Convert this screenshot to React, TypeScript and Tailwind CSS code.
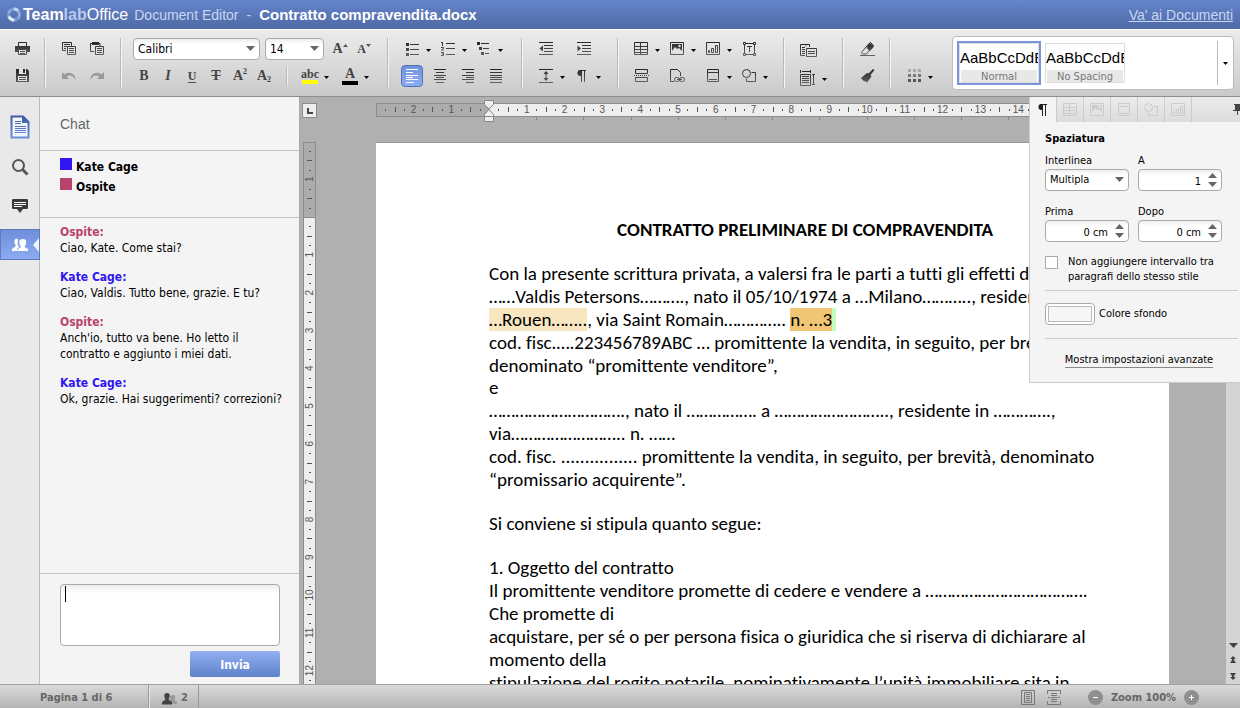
import clsx from 'clsx';
import type { ReactNode } from 'react';

const INK = 'url(#ink)';

const QUARTER_CM = 9.45;

const members = [
  { name: 'Kate Cage', swatch: 'bg-[#3016f2]', text: 'text-[#3016f2]' },
  { name: 'Ospite', swatch: 'bg-[#b8436b]', text: 'text-[#b8436b]' },
];

const messages = [
  { from: 1, lines: ['Ciao, Kate. Come stai?'] },
  { from: 0, lines: ['Ciao, Valdis. Tutto bene, grazie. E tu?'] },
  { from: 1, lines: ["Anch'io, tutto va bene. Ho letto il", 'contratto e aggiunto i miei dati.'] },
  { from: 0, lines: ['Ok, grazie. Hai suggerimenti? correzioni?'] },
];

function Svg({ w = 16, h = 16, children }: { w?: number; h?: number; children: ReactNode }) {
  return (
    <svg
      width={w}
      height={h}
      viewBox={`0 0 ${w} ${h}`}
      fill="none"
      stroke={INK}
      className="shrink-0"
      aria-hidden="true"
    >
      {children}
    </svg>
  );
}

function InkGradient() {
  return (
    <svg width="0" height="0" className="absolute" aria-hidden="true">
      <linearGradient id="ink" gradientUnits="userSpaceOnUse" x1="0" y1="0" x2="0" y2="16">
        <stop offset="0" stopColor="#222" />
        <stop offset="1" stopColor="#666" />
      </linearGradient>
      <linearGradient id="docBlue" gradientUnits="userSpaceOnUse" x1="0" y1="0" x2="0" y2="24">
        <stop offset="0" stopColor="#3d5a9c" />
        <stop offset="1" stopColor="#6b96e0" />
      </linearGradient>
    </svg>
  );
}

/* ---------- icons ---------- */

const PrintIcon = () => (
  <Svg>
    <path d="M4.5 5V1.5h8V5" />
    <path d="M1 5h15v6h-3V8H4v3H1z" fill={INK} stroke="none" />
    <path d="M4.5 8.5h8v5h-8zM6 10.5h5M6 12.5h5" />
  </Svg>
);

const SaveIcon = () => (
  <Svg>
    <path d="M2 1h11l2 2v11H2z" fill={INK} stroke="none" />
    <path d="M5 1h7v5H5zM4 8h9v5H4z" fill="#e4e4e4" stroke="none" />
    <path d="M9 1h2v4H9z" fill={INK} stroke="none" />
    <path d="M5 9.5h7M5 11.5h7" />
  </Svg>
);

const CopyIcon = () => (
  <Svg>
    <path d="M5 9.500H1.500v-8h9V5M3 3.500h6M3 5.500h3M3 7.500h2" />
    <path d="M6.500 5.500h8v8h-8zM8 7.500h5M8 9.500h5M8 11.500h5" />
  </Svg>
);

const PasteIcon = () => (
  <Svg>
    <path d="M5 10.500H1.500v-8h2M9 2.500h2V5" />
    <path d="M3 1h7v3H3z" fill={INK} stroke="none" />
    <path d="M6.500 5.500h8v8h-8zM8 7.500h5M8 9.500h5M8 11.500h5" />
  </Svg>
);

const UndoIcon = () => (
  <Svg>
    <path d="M1 4v7h7L5.500 8.500C9 6.500 12 7.500 14.500 12 15 6 8 2.500 3.500 6.500z" fill="#999" stroke="none" />
  </Svg>
);

const RedoIcon = () => (
  <Svg>
    <path d="M15 4v7H8l2.500-2.500C7 6.500 4 7.500 1.500 12 1 6 8 2.500 12.500 6.500z" fill="#999" stroke="none" />
  </Svg>
);

const BulletsIcon = () => (
  <Svg>
    <path d="M2 2h3v3H2zM2 7h3v3H2zM2 12h3v3H2z" fill={INK} stroke="none" />
    <path d="M6 3.500h9M6 8.500h9M6 13.500h9" />
  </Svg>
);

const NumbersIcon = () => (
  <Svg>
    <path d="M1 1.500h1.500V5M1 6.500h2.500v1L1.500 9h2M1 11.500h2.500v3H1M2 13h1.500" />
    <path d="M6 2.500h9M6 7.500h9M6 13.500h9" />
  </Svg>
);

const MultilevelIcon = () => (
  <Svg>
    <path d="M1 1h3v3H1zM3 6h3v3H3zM5 11h3v3H5z" fill={INK} stroke="none" />
    <path d="M5 2.500h8M7 7.500h6M9 12.500h4" />
  </Svg>
);

const AlignIcon = ({ kind, light }: { kind: 'left' | 'center' | 'right' | 'full'; light?: boolean }) => {
  const lines = {
    left: 'M2 1.500h12M2 4.500h7M2 7.500h12M2 9.500h7M2 11.500h12M2 14.500h8',
    center: 'M2 1.500h12M4 4.500h8M2 7.500h12M4 9.500h8M2 11.500h12M4 14.500h8',
    right: 'M2 1.500h12M6 4.500h8M2 7.500h12M6 9.500h8M2 11.500h12M6 14.500h8',
    full: 'M2 1.500h12M2 4.500h12M2 7.500h12M2 9.500h12M2 11.500h12M2 14.500h12',
  };
  return (
    <Svg>
      <path d={lines[kind]} stroke={light ? '#fff' : INK} />
    </Svg>
  );
};

const IndentIcon = ({ out }: { out?: boolean }) => (
  <Svg>
    <path d="M1 1.500h14M6 4.500h9M6 7.500h9M6 10.500h9M1 13.500h14" />
    <path d={out ? 'M5 4.500v6L1.500 7.500z' : 'M1.500 4.500v6L5 7.500z'} fill={INK} stroke="none" />
  </Svg>
);

const SpacingIcon = () => (
  <Svg>
    <path d="M1 1.500h14M1 14.500h14M8 4v8" />
    <path d="M5.500 6L8 3l2.500 3zM5.500 10L8 13l2.500-3z" fill={INK} stroke="none" />
  </Svg>
);

const PilcrowIcon = ({ dark }: { dark?: boolean }) => (
  <Svg>
    <path d="M7.500 3v11M10.500 3v11M5 2.500h7" stroke={dark ? '#222' : INK} />
    <path d="M8 2H6C2.500 2 2.500 8 6 8h2z" fill={dark ? '#222' : INK} stroke="none" />
  </Svg>
);

const TableIcon = ({ faint }: { faint?: boolean }) => (
  <Svg>
    <path
      d="M1.500 1.500h13v12h-13zM2 5.500h12M2 8.500h12M2 11.500h12M7.500 2v11"
      stroke={faint ? '#ccc' : INK}
    />
  </Svg>
);

const ImageIcon = ({ faint }: { faint?: boolean }) => {
  const c = faint ? '#ccc' : INK;
  return (
    <Svg>
      <path d="M1.500 1.500h13v12h-13z" stroke={c} />
      <path d="M3 3h10v7l-3-3-2 1-2-2-3 4z" fill={c} stroke="none" />
      <circle cx="10.500" cy="5" r="1.200" fill="#e6e6e6" stroke="none" />
    </Svg>
  );
};

const ChartIcon = ({ faint }: { faint?: boolean }) => (
  <Svg>
    <path
      d="M1.500 1.500h13v12h-13zM3.500 9.500h1v2h-1zM6.500 7.500h2v4h-2zM10.500 4.500h2v7h-2z"
      stroke={faint ? '#ccc' : INK}
    />
  </Svg>
);

const TextBoxIcon = () => (
  <Svg>
    <path d="M3.500 4v8M13.500 4v8M5 2.500h7M5 13.500h7M6 5.500h5M8.500 5v6" />
    <path d="M2.500 1.500h2v2h-2zM12.500 1.500h2v2h-2zM2.500 12.500h2v2h-2zM12.500 12.500h2v2h-2z" />
  </Svg>
);

const BreakIcon = () => (
  <Svg>
    <path d="M2.500 1.500h12v4h-12zM2.500 9.500h12v4h-12z" />
    <path d="M1 7.500h15" strokeDasharray="1 1" />
  </Svg>
);

const PageLinkIcon = () => (
  <Svg>
    <path d="M5 13.500H1.500v-12h7l3 3V8" />
    <rect x="5.500" y="9.500" width="5" height="4" rx="2" />
    <rect x="10.500" y="9.500" width="5" height="4" rx="2" />
    <path d="M8 11.500h5" />
  </Svg>
);

const HeaderIcon = ({ faint }: { faint?: boolean }) => (
  <Svg>
    <path d="M2.500 1.500h11v12h-11zM3 4.500h10M4 11.500h8" stroke={faint ? '#ccc' : INK} />
  </Svg>
);

const ShapesIcon = ({ faint }: { faint?: boolean }) => {
  const c = faint ? '#ccc' : INK;
  return (
    <Svg>
      <circle cx="5.500" cy="5.500" r="4" stroke={c} />
      <path d="M10.500 4.500h4v9h-9v-3" stroke={c} />
    </Svg>
  );
};

const WrapIcon = () => (
  <Svg w={18}>
    <path d="M6 12.500H1.500v-11h9V4M3 4.500h3M3 6.500h3M3 8.500h3M3 10.500h3M7 2.500v1" />
    <path d="M7.500 5.500h10v8h-10zM9 8.500h7M9 10.500h7" />
  </Svg>
);

const MarginsIcon = () => (
  <Svg w={18}>
    <path d="M3 1.500h8M1.500 0v3M11.500 0v3M14.500 5v9M13 4.500h3M13 14.500h3" />
    <path d="M1.500 4.500h10v11h-10zM3 6.500h7M3 8.500h7M3 10.500h7M3 12.500h7" />
  </Svg>
);

const EraserIcon = () => (
  <Svg>
    <path d="M2.500 11.500L9.500 3l2-1.500 3 3-7 8.500h-4zM1 14.500h15" />
    <path d="M9 4l2-2 4 3.500-4 4.500L7.500 7z" fill={INK} stroke="none" />
  </Svg>
);

const BrushIcon = () => (
  <Svg>
    <path
      d="M14 1l1.500 1-4 5 1 1.500L8 14.500 6 13l-1 .500-1-1.500-1-.500-1-1.500 6-5 1.500.500z"
      fill={INK}
      stroke="none"
    />
  </Svg>
);

const GridIcon = () => (
  <Svg>
    <path d="M2 2.500h13" stroke="#aaa" strokeWidth="3" strokeDasharray="3 2" />
    <path d="M2 7.500h13" stroke="#777" strokeWidth="3" strokeDasharray="3 2" />
    <path d="M2 12.500h13" stroke="#555" strokeWidth="3" strokeDasharray="3 2" />
  </Svg>
);

const LogoMark = () => (
  <Svg>
    <circle cx="7" cy="7.500" r="5.500" stroke="#8fa9dd" strokeWidth="3" strokeDasharray="5 .760" />
    <path d="M2 9.500A5.500 5.500 0 007 13" stroke="#e3ebfa" strokeWidth="3" />
    <path d="M7 2a5.500 5.500 0 014 1.500" stroke="#c3d2f0" strokeWidth="3" />
  </Svg>
);

function Triangle({ up, color = '#000', w = 5 }: { up?: boolean; color?: string; w?: 5 | 9 }) {
  const h = w === 5 ? 3 : 5;
  return (
    <svg width={w} height={h} viewBox={`0 0 ${w} ${h}`} aria-hidden="true">
      <path d={up ? `M0 ${h}h${w}L${w / 2} 0z` : `M0 0h${w}L${w / 2} ${h}z`} fill={color} />
    </svg>
  );
}

/* ---------- toolbar ---------- */

function Tool({ label, active, children }: { label: string; active?: boolean; children: ReactNode }) {
  return (
    <button
      type="button"
      aria-label={label}
      className={clsx(
        'flex size-[22px] shrink-0 items-center justify-center',
        active && 'rounded-sm border border-[#5470b4] bg-linear-to-b from-[#6f91df] to-[#8fadf2]',
      )}
    >
      {children}
    </button>
  );
}

function Split({ label, children }: { label: string; children: ReactNode }) {
  return (
    <div className="flex shrink-0">
      <Tool label={label}>{children}</Tool>
      <button
        type="button"
        aria-label={`${label}: opzioni`}
        className="flex w-[10px] items-center justify-center pt-0.5"
      >
        <Triangle />
      </button>
    </div>
  );
}

function Group({ className, children }: { className?: string; children: ReactNode }) {
  return (
    <div
      className={clsx(
        'mr-px flex h-[50px] shrink-0 flex-col gap-[5px] border-r border-[#b9b9b9] shadow-[1px_0_0_#f4f4f4]',
        className,
      )}
    >
      {children}
    </div>
  );
}

function Letter({ className, children }: { className?: string; children: ReactNode }) {
  return (
    <span className={clsx("font-['Liberation_Serif',serif] leading-none font-bold text-[#444]", className)}>
      {children}
    </span>
  );
}

const fieldClass =
  'h-[22px] w-full appearance-none rounded-sm border border-[#aaa] bg-white bg-linear-to-b from-[#eee] to-white to-25% text-black outline-none';

function Combo({ id, label, value, className }: { id: string; label?: string; value: string; className?: string }) {
  return (
    <div className={clsx('relative', className)}>
      <select id={id} aria-label={label} className={clsx(fieldClass, 'pl-1')}>
        <option>{value}</option>
      </select>
      <span className="pointer-events-none absolute top-2 right-[5px] flex">
        <Triangle w={9} color="#666" />
      </span>
    </div>
  );
}

function Toolbar() {
  return (
    <div className="flex h-[68px] shrink-0 items-start border-t border-b border-t-white border-b-[#8e8e8e] bg-linear-to-b from-[#ececec] to-[#cacaca] pt-2">
      <Group className="px-[11px]">
        <Tool label="Stampa">
          <PrintIcon />
        </Tool>
        <Tool label="Salva">
          <SaveIcon />
        </Tool>
      </Group>
      <Group className="px-3">
        <div className="flex gap-1.5">
          <Tool label="Copia">
            <CopyIcon />
          </Tool>
          <Tool label="Incolla">
            <PasteIcon />
          </Tool>
        </div>
        <div className="flex gap-1.5">
          <Tool label="Annulla">
            <UndoIcon />
          </Tool>
          <Tool label="Ripeti">
            <RedoIcon />
          </Tool>
        </div>
      </Group>
      <Group className="pr-3 pl-[11px]">
        <div className="flex gap-[5px]">
          <Combo id="font" label="Carattere" value="Calibri" className="w-[127px] text-xs" />
          <Combo id="size" label="Dimensione" value="14" className="w-[59px] text-xs" />
          <div className="flex gap-0.5">
            <Tool label="Aumenta">
              <Letter className="text-sm">A</Letter>
              <span className="mb-2">
                <Triangle up color="#555" />
              </span>
            </Tool>
            <Tool label="Riduci">
              <Letter className="text-xs">A</Letter>
              <span className="mb-2">
                <Triangle color="#555" />
              </span>
            </Tool>
          </div>
        </div>
        <div className="flex gap-0.5">
          <Tool label="Grassetto">
            <Letter className="text-sm">B</Letter>
          </Tool>
          <Tool label="Corsivo">
            <Letter className="text-sm italic">I</Letter>
          </Tool>
          <Tool label="Sottolineato">
            <Letter className="border-b border-[#555] text-xs">U</Letter>
          </Tool>
          <Tool label="Barrato">
            <Letter className="text-sm line-through">T</Letter>
          </Tool>
          <Tool label="Apice">
            <Letter className="text-sm">A</Letter>
            <Letter className="mb-2 text-[8px]">2</Letter>
          </Tool>
          <Tool label="Pedice">
            <Letter className="text-sm">A</Letter>
            <Letter className="mt-2 text-[8px]">2</Letter>
          </Tool>
          <div className="mx-[9px] my-px w-0.5 border-l border-[#b9b9b9] bg-[#f0f0f0]" />
          <div className="flex gap-2">
            <Split label="Evidenzia">
              <span className="flex flex-col items-center">
                <Letter className="text-xs leading-[10px]">abc</Letter>
                <span className="h-1 w-4 bg-[#ff0]" />
              </span>
            </Split>
            <Split label="Colore carattere">
              <span className="flex flex-col items-center">
                <Letter className="text-sm leading-[11px]">A</Letter>
                <span className="h-1 w-4 bg-black" />
              </span>
            </Split>
          </div>
        </div>
      </Group>
      <Group className="pr-[14px] pl-3">
        <div className="flex gap-1">
          <Split label="Elenco puntato">
            <BulletsIcon />
          </Split>
          <Split label="Elenco numerato">
            <NumbersIcon />
          </Split>
          <Split label="Elenco a livelli">
            <MultilevelIcon />
          </Split>
        </div>
        <div className="flex gap-1.5">
          <Tool label="Allinea a sinistra" active>
            <AlignIcon kind="left" light />
          </Tool>
          <Tool label="Centra">
            <AlignIcon kind="center" />
          </Tool>
          <Tool label="Allinea a destra">
            <AlignIcon kind="right" />
          </Tool>
          <Tool label="Giustifica">
            <AlignIcon kind="full" />
          </Tool>
        </div>
      </Group>
      <Group className="pr-[14px] pl-3">
        <div className="flex gap-4">
          <Tool label="Riduci rientro">
            <IndentIcon out />
          </Tool>
          <Tool label="Aumenta rientro">
            <IndentIcon />
          </Tool>
        </div>
        <div className="flex gap-1">
          <Split label="Interlinea paragrafo">
            <SpacingIcon />
          </Split>
          <Split label="Caratteri non stampabili">
            <PilcrowIcon />
          </Split>
        </div>
      </Group>
      <Group className="pr-[13px] pl-[11px]">
        <div className="flex gap-1">
          <Split label="Tabella">
            <TableIcon />
          </Split>
          <Split label="Immagine">
            <ImageIcon />
          </Split>
          <Split label="Grafico">
            <ChartIcon />
          </Split>
          <Tool label="Casella di testo">
            <TextBoxIcon />
          </Tool>
        </div>
        <div className="flex gap-1">
          <div className="flex gap-[14px] pr-[10px]">
            <Tool label="Interruzione">
              <BreakIcon />
            </Tool>
            <Tool label="Collegamento">
              <PageLinkIcon />
            </Tool>
          </div>
          <Split label="Intestazione">
            <HeaderIcon />
          </Split>
          <Split label="Forma">
            <ShapesIcon />
          </Split>
        </div>
      </Group>
      <Group className="pt-0.5 pr-[13px] pl-3">
        <Tool label="Disposizione">
          <WrapIcon />
        </Tool>
        <Split label="Margini">
          <MarginsIcon />
        </Split>
      </Group>
      <Group className="pr-[11px] pl-3">
        <Tool label="Cancella stile">
          <EraserIcon />
        </Tool>
        <Tool label="Copia stile">
          <BrushIcon />
        </Tool>
      </Group>
      <div className="flex h-[50px] items-end pb-px pl-3">
        <Split label="Combinazione colori">
          <GridIcon />
        </Split>
      </div>
      <div className="-mt-0.5 mr-[6px] ml-auto flex h-[54px] w-[282px] items-center rounded border border-[#bbb] bg-white pl-1">
        <StyleTile name="Normal" selected />
        <StyleTile name="No Spacing" />
        <button
          type="button"
          aria-label="Altri stili"
          className="ml-auto flex h-11 w-4 items-center justify-center border-l border-[#bbb]"
        >
          <Triangle />
        </button>
      </div>
    </div>
  );
}

function StyleTile({ name, selected }: { name: string; selected?: boolean }) {
  return (
    <button
      type="button"
      className={clsx('mr-0.5 shrink-0 border-2', selected ? 'border-[#7b95dd]' : 'border-transparent')}
    >
      <span className="flex h-10 w-20 flex-col overflow-hidden border border-[#ddd] text-left">
        <span className="h-6 pt-0.5 font-['Liberation_Sans',sans-serif] text-[15px] leading-6 whitespace-nowrap text-black">
          AaBbCcDdE
        </span>
        <span className="mx-px mt-0.5 h-3 bg-[#e8e8e8] text-center text-[11px] leading-[14px] text-[#777]">
          {name}
        </span>
      </span>
    </button>
  );
}

/* ---------- left side ---------- */

function Rail() {
  return (
    <nav className="flex w-10 shrink-0 flex-col items-center border-r border-[#bbb] bg-[#e9e9e9]">
      <button type="button" aria-label="File" className="mt-3 flex h-9 items-center justify-center">
        <svg width="20" height="24" viewBox="0 0 20 24" fill="none" aria-hidden="true">
          <path d="M2 1.500h11l5.500 5.500v15.500H1.500v-21z" fill="#f2f5fb" stroke="url(#docBlue)" strokeWidth="2" />
          <path d="M12 1l7 7h-7z" fill="url(#docBlue)" />
          <path
            d="M5 6.500h6M5 8.500h6M5 11.500h11M5 13.500h11M5 15.500h11M5 17.500h11"
            stroke="url(#docBlue)"
          />
        </svg>
      </button>
      <button type="button" aria-label="Cerca" className="mt-1 flex h-9 items-center justify-center">
        <svg width="18" height="18" viewBox="0 0 18 18" fill="none" stroke="#555" aria-hidden="true">
          <circle cx="7.500" cy="7.500" r="5.500" strokeWidth="2" />
          <path d="M11.500 11.500l5 5" strokeWidth="3" />
        </svg>
      </button>
      <button type="button" aria-label="Commenti" className="mt-[3px] flex h-9 items-center justify-center">
        <svg width="18" height="16" viewBox="0 0 18 16" aria-hidden="true">
          <path d="M2 1h14q1 0 1 1v8q0 1-1 1h-4l-3 4-3-4H2q-1 0-1-1V2q0-1 1-1z" fill="#3a3a3a" />
          <path d="M3 4.500h12M3 6.500h12M3 8.500h8" stroke="#fff" />
        </svg>
      </button>
      <button
        type="button"
        aria-label="Chat"
        className="relative mt-[5px] -mr-px flex h-[31px] w-10 items-center justify-center border border-[#5f7abb] bg-linear-to-b from-[#6f8fdc] to-[#8cabf1]"
      >
        <svg width="16" height="14" viewBox="0 0 16 14" fill="#fff" aria-hidden="true">
          <path d="M6 1C3 0 2 2 2.500 5L4 8 0 11v2h6l-1-2 2-2-1.500-3z" />
          <path d="M11 1C7 1 7 4 7.500 6L9 9l-3 2v2h10v-2l-3.500-2L14 6c.500-2 .500-5-3-5z" />
        </svg>
        <svg width="6" height="14" viewBox="0 0 6 14" className="absolute right-0" aria-hidden="true">
          <path d="M6 0v14L0 7z" fill="#f4f4f4" />
        </svg>
      </button>
    </nav>
  );
}

function ChatPanel() {
  return (
    <aside className="flex w-[260px] shrink-0 flex-col border-r border-[#aaa] bg-[#f4f4f4] text-xs text-black">
      <h2 className="flex h-[54px] items-center border-b border-[#c4c4c4] pl-5 font-['Liberation_Sans',sans-serif] text-sm text-[#666]">
        Chat
      </h2>
      <ul className="h-[67px] border-b border-[#c4c4c4] pt-1.5 pl-5 font-bold">
        {members.map((m) => (
          <li key={m.name} className="flex h-5 gap-1 leading-5">
            <span className={clsx('mt-px size-3', m.swatch)} />
            {m.name}
          </li>
        ))}
      </ul>
      <div className="flex flex-1 flex-col gap-[13px] overflow-hidden pt-1.5 pl-5 leading-4">
        {messages.map((m, i) => (
          <div key={i} className="whitespace-nowrap">
            <p className={clsx('font-bold', members[m.from].text)}>{members[m.from].name}:</p>
            {m.lines.map((line) => (
              <p key={line}>{line}</p>
            ))}
          </div>
        ))}
      </div>
      <form className="relative flex h-[111px] flex-col items-end border-t border-[#c4c4c4] pt-[10px] pr-[19px] pl-5">
        <textarea
          aria-label="Messaggio"
          className="h-[62px] w-full resize-none rounded-sm border border-[#aaa] bg-white bg-linear-to-b from-[#eee] to-white to-15% px-1 outline-none"
        />
        <span className="absolute top-3 left-[25px] h-4 w-px bg-black" />
        <button
          type="button"
          className="mt-[5px] h-[26px] w-[90px] rounded-xs bg-linear-to-b from-[#92b0f2] to-[#5f82cb] pt-0.5 text-xs font-bold text-white"
        >
          Invia
        </button>
      </form>
    </aside>
  );
}

/* ---------- document ---------- */

function rulerMarks(from: number, to: number) {
  const marks: { at: number; kind: 'num' | 'half' | 'quarter'; n: number }[] = [];
  for (let q = from * 4; q <= to * 4; q++) {
    if (q === 0) continue;
    const kind = q % 4 === 0 ? 'num' : q % 2 === 0 ? 'half' : 'quarter';
    marks.push({ at: q * QUARTER_CM, kind, n: Math.abs(q / 4) });
  }
  return marks;
}

function HorizontalRuler() {
  return (
    <svg width="793" height="24" className="shrink-0 overflow-visible" aria-hidden="true">
      <rect x="0.500" y="3.500" width="792" height="13" fill="#acacac" stroke="#8c8c8c" />
      <rect x="113" y="4" width="640" height="12" fill="#eee" />
      <g transform="translate(113 0)">
        {rulerMarks(-2.75, 16.5).map((m) =>
          m.kind === 'num' ? (
            <text
              key={m.at}
              x={m.at}
              y="13"
              textAnchor="middle"
              className="fill-[#555] font-['Liberation_Sans',sans-serif] text-[10px]"
            >
              {m.n}
            </text>
          ) : (
            <path
              key={m.at}
              d={`M${Math.round(m.at) + 0.5} ${m.kind === 'half' ? 7 : 9}v${m.kind === 'half' ? 5 : 2}`}
              stroke="#555"
            />
          ),
        )}
        {Array.from({ length: 13 }, (_, i) => (
          <path key={i} d={`M${Math.round((i + 1) * 47.2) + 0.5} 17v3`} stroke="#888" />
        ))}
        <path d="M-4.500 0.500h9v4L0 9l-4.500-4.500z" fill="#eee" stroke="#888" />
        <path d="M0 9.500l4.500 5v7h-9v-7zM-4.500 16.500h9" fill="#eee" stroke="#888" />
      </g>
    </svg>
  );
}

function VerticalRuler() {
  return (
    <svg width="13" height="560" className="shrink-0" aria-hidden="true">
      <rect x="0.500" y="0.500" width="12" height="600" fill="#eee" stroke="#8c8c8c" />
      <rect x="0.500" y="0.500" width="12" height="75" fill="#acacac" stroke="#8c8c8c" />
      <g transform="translate(0 75)">
        {rulerMarks(-1.75, 12.5).map((m) =>
          m.kind === 'num' ? (
            <text
              key={m.at}
              transform={`translate(10 ${m.at}) rotate(-90)`}
              textAnchor="middle"
              className="fill-[#555] font-['Liberation_Sans',sans-serif] text-[10px]"
            >
              {m.n}
            </text>
          ) : (
            <path
              key={m.at}
              d={`M${m.kind === 'half' ? 4 : 6} ${Math.round(m.at) + 0.5}h${m.kind === 'half' ? 5 : 2}`}
              stroke="#555"
            />
          ),
        )}
      </g>
    </svg>
  );
}

function Page() {
  return (
    <article className="w-[793px] shrink-0 overflow-hidden border-t border-[#9a9a9a] bg-white pt-[75px] pr-12 pl-[113px] font-['Carlito','Lato',sans-serif] text-[19px] leading-[23px] whitespace-nowrap text-black [font-variant-ligatures:none]">
      <h1 className="mb-[21px] text-center font-bold">CONTRATTO PRELIMINARE DI COMPRAVENDITA</h1>
      <p>
        Con la presente scrittura privata, a valersi fra le parti a tutti gli effetti di
        <br />
        ……Valdis Petersons………., nato il 05/10/1974 a …Milano……….., residente in
        <br />
        <mark className="bg-[#f8e6c1] text-black">…Rouen……..</mark>, via Saint Romain…………..{' '}
        <mark className="border-r-4 border-[#bfffbf] bg-[#f0c674] text-black">n. …3</mark>
        <br />
        cod. fisc.….223456789ABC … promittente la vendita, in seguito, per brevità,
        <br />
        denominato “promittente venditore”,
      </p>
      <p className="leading-[22px]">e</p>
      <p>
        …………………………., nato il ……………. a …………………….., residente in ………….,
        <br />
        via…………………….. n. ……
        <br />
        cod. fisc. ................ promittente la vendita, in seguito, per brevità, denominato
        <br />
        “promissario acquirente”.
      </p>
      <p className="mt-[21px]">Si conviene si stipula quanto segue:</p>
      <p className="mt-[21px]">1. Oggetto del contratto</p>
      <p>
        Il promittente venditore promette di cedere e vendere a ……………………………….
        <br />
        Che promette di
        <br />
        acquistare, per sé o per persona fisica o giuridica che si riserva di dichiarare al
        <br />
        momento della
        <br />
        stipulazione del rogito notarile, nominativamente l’unità immobiliare sita in
      </p>
    </article>
  );
}

function DocumentArea() {
  return (
    <main className="flex min-w-0 flex-1 bg-[#b0b0b0]">
      <div className="flex min-w-0 flex-1 flex-col overflow-hidden">
        <div className="flex h-[45px] shrink-0 pt-[3px] pl-0.5">
          <button
            type="button"
            aria-label="Tabulazione"
            className="mt-[3px] mr-[59px] flex size-[15px] shrink-0 items-center justify-center border border-[#8c8c8c] bg-[#eee]"
          >
            <svg width="6" height="6" aria-hidden="true">
              <path d="M1 0v5h5" fill="none" stroke="#444" strokeWidth="2" />
            </svg>
          </button>
          <HorizontalRuler />
        </div>
        <div className="flex min-h-0 flex-1 gap-[60px] pl-[3px]">
          <VerticalRuler />
          <Page />
        </div>
      </div>
      <div className="flex w-[14px] shrink-0 flex-col items-center justify-end gap-2 bg-[#d4d4d4] pb-1">
        <Triangle w={9} color="#444" />
        <svg width="6" height="8" viewBox="0 0 6 8" fill="#444" aria-hidden="true">
          <path d="M3 0l3 3H4v1l2 3H0l2-3V3H0z" />
        </svg>
        <svg width="6" height="8" viewBox="0 0 6 8" fill="#444" aria-hidden="true">
          <path d="M3 8l3-3H4V4l2-3H0l2 3v1H0z" />
        </svg>
      </div>
    </main>
  );
}

/* ---------- paragraph settings ---------- */

function Spinner({ id, label, value }: { id: string; label: string; value: string }) {
  return (
    <div className="w-[84px]">
      <label htmlFor={id} className="block h-4 leading-4">
        {label}
      </label>
      <div className="relative">
        <input id={id} defaultValue={value} className={clsx(fieldClass, 'pt-0.5 pr-5 text-right')} />
        <span className="pointer-events-none absolute top-1 right-[5px] flex flex-col gap-1">
          <Triangle w={9} up color="#666" />
          <Triangle w={9} color="#666" />
        </span>
      </div>
    </div>
  );
}

const panelTabs = [
  { label: 'Impostazioni tabella', icon: <TableIcon faint /> },
  { label: 'Impostazioni immagine', icon: <ImageIcon faint /> },
  { label: 'Impostazioni intestazione', icon: <HeaderIcon faint /> },
  { label: 'Impostazioni forma', icon: <ShapesIcon faint /> },
  { label: 'Impostazioni grafico', icon: <ChartIcon faint /> },
];

function ParagraphPanel() {
  return (
    <section className="absolute top-0 right-0 h-[286px] w-[211px] overflow-hidden border-b border-l border-[#ccc] bg-[#f4f4f4] text-[11px] text-black">
      <div className="flex h-[25px] bg-linear-to-b from-[#ececec] to-[#dcdcdc]">
        <button
          type="button"
          aria-label="Impostazioni paragrafo"
          className="flex w-[27px] shrink-0 items-center justify-center border-r border-[#ccc] bg-[#f4f4f4]"
        >
          <PilcrowIcon dark />
        </button>
        {panelTabs.map((t) => (
          <button
            key={t.label}
            type="button"
            aria-label={t.label}
            className="flex w-[27px] shrink-0 items-center justify-center border-r border-[#ccc]"
          >
            {t.icon}
          </button>
        ))}
        <button type="button" aria-label="Fissa" className="-mr-0.5 ml-auto flex items-center">
          <svg width="9" height="11" viewBox="0 0 9 11" fill="#444" aria-hidden="true">
            <path d="M1 0h7v1H7v5h2v1H5v4H4V7H0V6h2V1H1z" />
          </svg>
        </button>
      </div>
      <div className="pl-[15px]">
        <h3 className="mt-[9px] leading-4 font-bold">Spaziatura</h3>
        <div className="mt-1.5 flex gap-[9px]">
          <div className="w-[84px]">
            <label htmlFor="spacing" className="block h-4 leading-4">
              Interlinea
            </label>
            <Combo id="spacing" value="Multipla" />
          </div>
          <Spinner id="at" label="A" value="1" />
        </div>
        <div className="mt-[13px] flex gap-[9px]">
          <Spinner id="before" label="Prima" value="0 cm" />
          <Spinner id="after" label="Dopo" value="0 cm" />
        </div>
        <label className="mt-3 flex items-start gap-[10px] leading-[15px] whitespace-nowrap">
          <input
            type="checkbox"
            className="mt-0.5 size-[13px] shrink-0 appearance-none border border-[#aaa] bg-white"
          />
          <span>
            Non aggiungere intervallo tra
            <br />
            paragrafi dello stesso stile
          </span>
        </label>
        <hr className="mt-1.5 mr-0.5 border-[#ccc]" />
        <div className="mt-3 flex items-center gap-1">
          <button
            type="button"
            aria-labelledby="background-label"
            className="h-[22px] w-[50px] rounded-sm border border-[#aaa] bg-white p-0.5"
          >
            <span className="block h-full border border-[#bbb] bg-[#f6f6f6]" />
          </button>
          <span id="background-label">Colore sfondo</span>
        </div>
        <hr className="mt-[13px] mr-0.5 border-[#ccc]" />
        <p className="mt-[13px] pr-[7px] text-center">
          <a href="#avanzate" className="inline-block border-b border-[#888] leading-[15px] whitespace-nowrap">
            Mostra impostazioni avanzate
          </a>
        </p>
      </div>
    </section>
  );
}

/* ---------- status bar ---------- */

function StatusBar() {
  return (
    <footer className="flex h-6 shrink-0 items-stretch border-t border-[#a0a0a0] bg-linear-to-b from-[#dadada] to-[#b4b4b4] text-[11px] font-bold text-[#666]">
      <div className="flex w-[149px] items-center border-r border-[#999] pt-1 pl-10">Pagina 1 di 6</div>
      <div className="flex w-[50px] items-center gap-1 border-r border-[#999] border-l border-l-[#e8e8e8] pt-1 pl-3">
        <svg width="15" height="12" viewBox="0 0 15 12" aria-hidden="true">
          <path d="M11 2c3 0 2.500 3 1.500 5l2.500 2v2H8V3z" fill="#999" />
          <path d="M5 0c4 0 3 4 1.500 6.500L10 9v2.500H0V9l3.500-2.500C2 4 1.500 0 5 0z" fill="#444" />
        </svg>
        2
      </div>
      <div className="mr-[41px] ml-auto flex items-center pt-0.5">
        <button type="button" aria-label="Adatta alla pagina" className="mr-3">
          <svg width="14" height="15" fill="none" stroke="#777" aria-hidden="true">
            <path d="M.500.500h13v14H.500zM3.500 2.500h7v10h-7zM5 4.500h4M5 6.500h4M5 8.500h4M5 10.500h4" />
          </svg>
        </button>
        <button type="button" aria-label="Adatta alla larghezza" className="mr-[26px]">
          <svg width="15" height="15" fill="none" stroke="#777" aria-hidden="true">
            <path d="M.500 4V.500h13V4M.500 11v3.500h13V11M4 3.500h6M4 5.500h6M4 7.500h6M4 9.500h6M4 11.500h6M1 7.500h2M11 7.500h2" />
          </svg>
        </button>
        <button
          type="button"
          aria-label="Riduci zoom"
          className="flex size-[15px] items-center justify-center rounded-full bg-[#8f8f8f]"
        >
          <span className="h-px w-[5px] bg-white" />
        </button>
        <span className="mx-2 pt-0.5">Zoom 100%</span>
        <button
          type="button"
          aria-label="Aumenta zoom"
          className="flex size-[15px] items-center justify-center rounded-full bg-[#8f8f8f]"
        >
          <svg width="5" height="5" stroke="#fff" aria-hidden="true">
            <path d="M0 2.500h5M2.500 0v5" />
          </svg>
        </button>
      </div>
    </footer>
  );
}

export default function App() {
  return (
    <div className="flex h-screen flex-col overflow-hidden font-['DejaVu_Sans_Condensed','Noto_Sans',sans-serif]">
      <InkGradient />
      <header className="flex h-[29px] shrink-0 items-center bg-linear-to-b from-[#6484cc] to-[#4f6aa4] px-[7px] font-['Liberation_Sans',sans-serif] text-sm text-[#c8d6f2]">
        <LogoMark />
        <span className="text-base font-bold text-white">
          Team<span className="text-[#b7c9ee]">lab</span>
          <span className="font-normal">Office</span>
        </span>
        <span className="ml-1.5">Document Editor</span>
        <span className="mx-2">-</span>
        <h1 className="text-[15px] font-bold text-white">Contratto compravendita.docx</h1>
        <a href="#documenti" className="ml-auto underline">
          Va' ai Documenti
        </a>
      </header>
      <Toolbar />
      <div className="relative flex min-h-0 flex-1">
        <Rail />
        <ChatPanel />
        <DocumentArea />
        <ParagraphPanel />
      </div>
      <StatusBar />
    </div>
  );
}
